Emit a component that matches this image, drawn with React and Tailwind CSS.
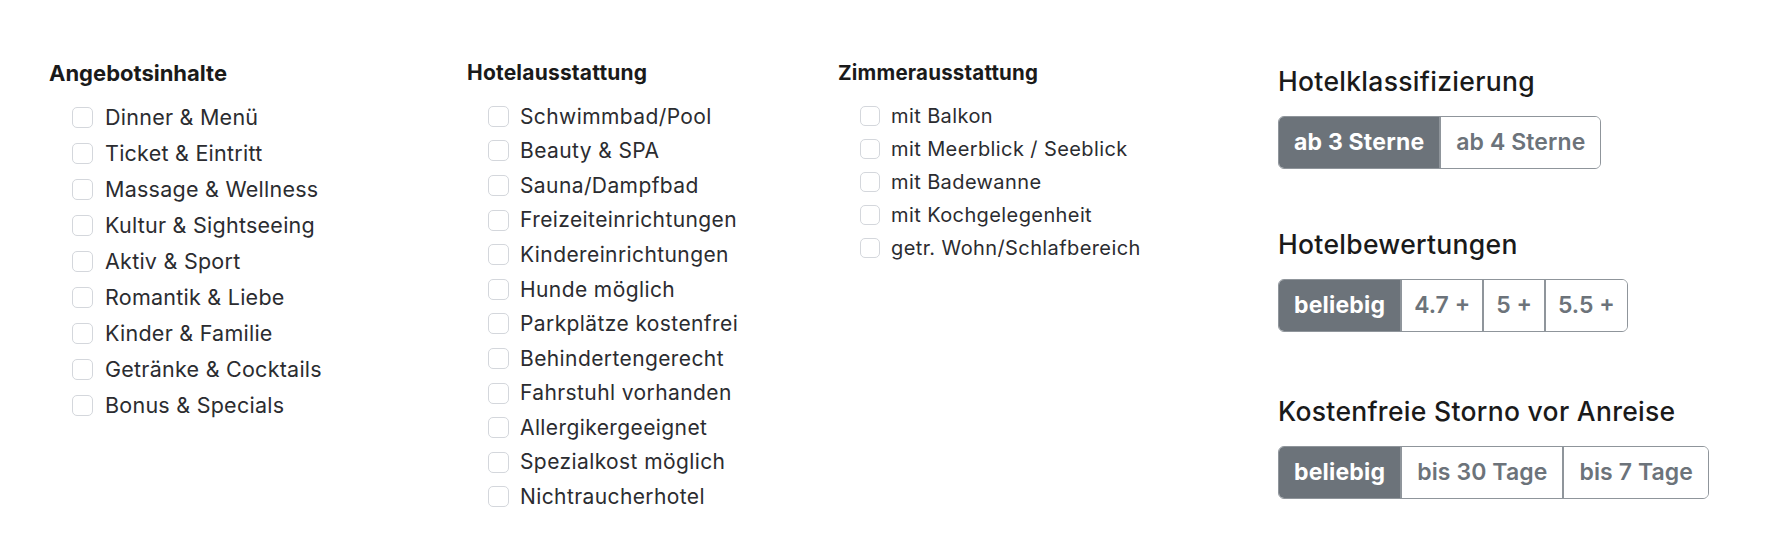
import React from "react";

const col1 = ["Dinner & Menü","Ticket & Eintritt","Massage & Wellness","Kultur & Sightseeing","Aktiv & Sport","Romantik & Liebe","Kinder & Familie","Getränke & Cocktails","Bonus & Specials"];
const col2 = ["Schwimmbad/Pool","Beauty & SPA","Sauna/Dampfbad","Freizeiteinrichtungen","Kindereinrichtungen","Hunde möglich","Parkplätze kostenfrei","Behindertengerecht","Fahrstuhl vorhanden","Allergikergeeignet","Spezialkost möglich","Nichtraucherhotel"];
const col3 = ["mit Balkon","mit Meerblick / Seeblick","mit Badewanne","mit Kochgelegenheit","getr. Wohn/Schlafbereich"];

function Box({ size }) {
  return <span className={`${size} shrink-0 rounded-[5px] border border-[#d4d7dc] bg-white`} />;
}

function Segments({ items, tight }) {
  return (
    <div className="flex w-max overflow-hidden rounded-[6px] border border-[#8f959b]">
      {items.map((t, i) => (
        <div
          key={t}
          className={
            i === 0
              ? "flex h-[51px] items-center bg-[#6c737a] px-[15px] text-[23px] font-bold tracking-[0.2px] text-white"
              : tight
              ? "flex h-[51px] items-center border-l-2 border-[#8f959b] bg-white px-[12px] text-[23px] font-semibold tracking-[0px] text-[#6c737a]"
              : "flex h-[51px] items-center border-l-2 border-[#8f959b] bg-white px-[15px] text-[23px] font-semibold tracking-[0.1px] text-[#6c737a]"
          }
        >
          {t}
        </div>
      ))}
    </div>
  );
}

export default function App() {
  return (
    <div className="h-[560px] w-[1770px] bg-white text-[#2b2c30]" style={{ fontFamily: "Inter, 'Liberation Sans', sans-serif" }}>
      <div className="flex pl-[49px] pt-[61px]">
        <div className="w-[418px]">
          <div className="h-[24px] text-[22px] font-bold leading-[24px] text-[#1a1a1a]">Angebotsinhalte</div>
          <div className="mt-[14px] pl-[23px]">
            {col1.map((t) => (
              <div key={t} className="flex h-[36px] items-center gap-[12px]">
                <Box size="h-[21px] w-[21px]" />
                <span className="text-[21.5px] tracking-[0.25px]">{t}</span>
              </div>
            ))}
          </div>
        </div>
        <div className="w-[371px]">
          <div className="h-[24px] text-[21px] font-bold leading-[24px] tracking-[0.2px] text-[#1a1a1a]">Hotelausstattung</div>
          <div className="mt-[14px] pl-[21px]">
            {col2.map((t) => (
              <div key={t} className="flex h-[34.6px] items-center gap-[11px]">
                <Box size="h-[21px] w-[21px]" />
                <span className="text-[21px] tracking-[0.4px]">{t}</span>
              </div>
            ))}
          </div>
        </div>
        <div className="w-[440px]">
          <div className="h-[24px] text-[20.5px] font-bold leading-[24px] tracking-[0.2px] text-[#1a1a1a]">Zimmerausstattung</div>
          <div className="mt-[14px] pl-[22px]">
            {col3.map((t) => (
              <div key={t} className="flex h-[33px] items-center gap-[11px]">
                <Box size="h-[20px] w-[20px]" />
                <span className="text-[20px] tracking-[0.4px]">{t}</span>
              </div>
            ))}
          </div>
        </div>
        <div className="mt-[4px] flex flex-col">
          <div className="h-[32px] text-[26.5px] font-medium leading-[32px] tracking-[0.3px] text-[#1a1a1a]">Hotelklassifizierung</div>
          <div className="mt-[19px]">
            <Segments items={["ab 3 Sterne", "ab 4 Sterne"]} />
          </div>
          <div className="mt-[59px] h-[32px] text-[26.5px] font-medium leading-[32px] tracking-[0.3px] text-[#1a1a1a]">Hotelbewertungen</div>
          <div className="mt-[19px]">
            <Segments items={["beliebig", "4.7 +", "5 +", "5.5 +"]} tight />
          </div>
          <div className="mt-[63px] h-[32px] text-[26.5px] font-medium leading-[32px] tracking-[0.3px] text-[#1a1a1a]">Kostenfreie Storno vor Anreise</div>
          <div className="mt-[19px]">
            <Segments items={["beliebig", "bis 30 Tage", "bis 7 Tage"]} />
          </div>
        </div>
      </div>
    </div>
  );
}
